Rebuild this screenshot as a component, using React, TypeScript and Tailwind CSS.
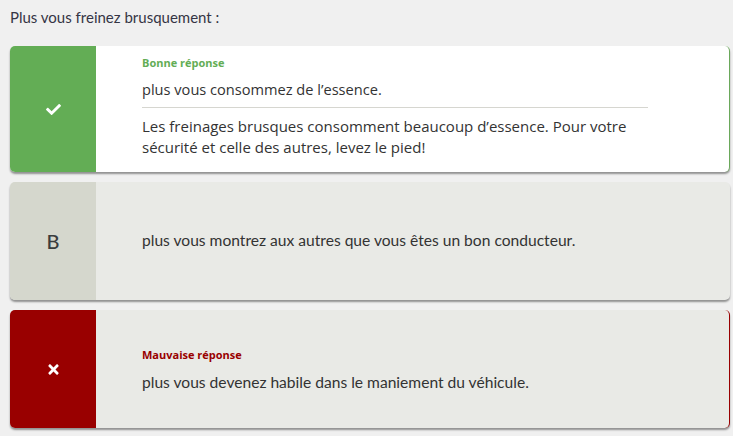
import { FaCheck, FaTimes } from "react-icons/fa";

const lato = "font-['Lato','Liberation_Sans',sans-serif]";
const ubu = "font-['Open_Sans','Noto_Sans',sans-serif]";

export default function App() {
  return (
    <div className={`min-h-[436px] w-[733px] bg-[#f0f0f0] pt-[7px] ${lato}`}>
      <p className="ml-[10px] text-[15px] leading-[20px] text-[#353545]">Plus vous freinez brusquement :</p>

      <div className="ml-[10px] mt-[19px] flex w-[720px] flex-col gap-[10px]">
        {/* correct answer */}
        <div className="flex overflow-hidden rounded-[5px] border-r border-[#6aa85a] bg-white shadow-[0_2px_2px_rgba(0,0,0,0.4)]">
          <div className="flex w-[86px] shrink-0 items-center justify-center bg-[#63ad55] text-white">
            <FaCheck size={15} />
          </div>
          <div className={`flex-1 pl-[46px] pr-[81px] pt-[10px] pb-[14px] ${ubu}`}>
            <div className="text-[11px] font-bold leading-[14px] text-[#63ad55]">Bonne réponse</div>
            <div className="mt-[8px] border-b border-[#d6d6d0] pb-[7px] text-[14.6px] leading-[22px] text-[#333]">
              plus vous consommez de l’essence.
            </div>
            <div className="pt-[8px] text-[15px] leading-[21px] text-[#333]">
              Les freinages brusques consomment beaucoup d’essence. Pour votre sécurité et celle des autres, levez le pied!
            </div>
          </div>
        </div>

        {/* neutral answer */}
        <div className="flex h-[118px] overflow-hidden rounded-[5px] bg-[#e9eae6] shadow-[0_2px_2px_rgba(0,0,0,0.4)]">
          <div className="flex w-[86px] shrink-0 items-center justify-center bg-[#d5d7cd] text-[20px] font-medium text-[#3a3d3d]">
            B
          </div>
          <div className="flex flex-1 items-center pl-[46px] text-[15.6px] text-[#333]">
            plus vous montrez aux autres que vous êtes un bon conducteur.
          </div>
        </div>

        {/* wrong answer */}
        <div className="flex h-[118px] overflow-hidden rounded-[5px] border-r border-[#990000] bg-[#e9eae6] shadow-[0_2px_2px_rgba(0,0,0,0.4)]">
          <div className="flex w-[86px] shrink-0 items-center justify-center bg-[#990000] text-white">
            <FaTimes size={15} />
          </div>
          <div className="flex flex-1 flex-col justify-center pl-[46px] pt-[2px]">
            <div className={`text-[11px] font-bold leading-[14px] text-[#990000] ${ubu}`}>Mauvaise réponse</div>
            <div className="mt-[9px] text-[15.6px] leading-[22px] text-[#333]">
              plus vous devenez habile dans le maniement du véhicule.
            </div>
          </div>
        </div>
      </div>
    </div>
  );
}
